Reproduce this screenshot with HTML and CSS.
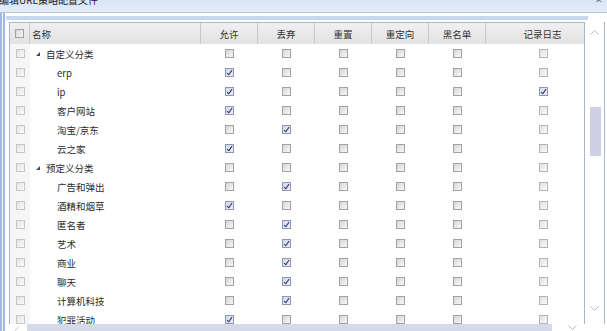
FILE: index.html
```html
<!DOCTYPE html>
<html lang="zh-CN">

<head>
    <meta charset="UTF-8">
    <title>编辑URL策略配置文件</title>
    <link rel="stylesheet" href="styles.css">
</head>

<body>
    <div class="window">
        <!-- Title bar -->
        <div class="titlebar">
            <span class="title">编辑URL策略配置文件</span>
            <span class="close">✕</span>
        </div>

        <div class="frame">
            <div class="strip"></div>

            <div class="view">
                <!-- Policy grid -->
                <div class="grid">
                    <div class="row head">
                        <div class="cell sel"><span class="cb"></span></div>
                        <div class="cell name">名称</div>
                        <div class="cell">允许</div>
                        <div class="cell">丢弃</div>
                        <div class="cell">重置</div>
                        <div class="cell">重定向</div>
                        <div class="cell">黑名单</div>
                        <div class="cell">记录日志</div>
                    </div>

                    <div class="row">
                        <div class="cell sel"><span class="cb dim"></span></div>
                        <div class="cell name group"><span class="tri"></span>自定义分类</div>
                        <div class="cell"><span class="cb"></span></div>
                        <div class="cell"><span class="cb"></span></div>
                        <div class="cell"><span class="cb"></span></div>
                        <div class="cell"><span class="cb"></span></div>
                        <div class="cell"><span class="cb"></span></div>
                        <div class="cell"><span class="cb light"></span></div>
                    </div>
                    <div class="row">
                        <div class="cell sel"><span class="cb dim"></span></div>
                        <div class="cell name child">erp</div>
                        <div class="cell"><span class="cb on"></span></div>
                        <div class="cell"><span class="cb"></span></div>
                        <div class="cell"><span class="cb"></span></div>
                        <div class="cell"><span class="cb"></span></div>
                        <div class="cell"><span class="cb"></span></div>
                        <div class="cell"><span class="cb light"></span></div>
                    </div>
                    <div class="row">
                        <div class="cell sel"><span class="cb dim"></span></div>
                        <div class="cell name child">ip</div>
                        <div class="cell"><span class="cb on"></span></div>
                        <div class="cell"><span class="cb"></span></div>
                        <div class="cell"><span class="cb"></span></div>
                        <div class="cell"><span class="cb"></span></div>
                        <div class="cell"><span class="cb"></span></div>
                        <div class="cell"><span class="cb on"></span></div>
                    </div>
                    <div class="row">
                        <div class="cell sel"><span class="cb dim"></span></div>
                        <div class="cell name child">客户网站</div>
                        <div class="cell"><span class="cb on"></span></div>
                        <div class="cell"><span class="cb"></span></div>
                        <div class="cell"><span class="cb"></span></div>
                        <div class="cell"><span class="cb"></span></div>
                        <div class="cell"><span class="cb"></span></div>
                        <div class="cell"><span class="cb light"></span></div>
                    </div>
                    <div class="row">
                        <div class="cell sel"><span class="cb dim"></span></div>
                        <div class="cell name child">淘宝/京东</div>
                        <div class="cell"><span class="cb"></span></div>
                        <div class="cell"><span class="cb on"></span></div>
                        <div class="cell"><span class="cb"></span></div>
                        <div class="cell"><span class="cb"></span></div>
                        <div class="cell"><span class="cb"></span></div>
                        <div class="cell"><span class="cb light"></span></div>
                    </div>
                    <div class="row">
                        <div class="cell sel"><span class="cb dim"></span></div>
                        <div class="cell name child">云之家</div>
                        <div class="cell"><span class="cb on"></span></div>
                        <div class="cell"><span class="cb"></span></div>
                        <div class="cell"><span class="cb"></span></div>
                        <div class="cell"><span class="cb"></span></div>
                        <div class="cell"><span class="cb"></span></div>
                        <div class="cell"><span class="cb light"></span></div>
                    </div>
                    <div class="row">
                        <div class="cell sel"><span class="cb dim"></span></div>
                        <div class="cell name group"><span class="tri"></span>预定义分类</div>
                        <div class="cell"><span class="cb"></span></div>
                        <div class="cell"><span class="cb"></span></div>
                        <div class="cell"><span class="cb"></span></div>
                        <div class="cell"><span class="cb"></span></div>
                        <div class="cell"><span class="cb"></span></div>
                        <div class="cell"><span class="cb light"></span></div>
                    </div>
                    <div class="row">
                        <div class="cell sel"><span class="cb dim"></span></div>
                        <div class="cell name child">广告和弹出</div>
                        <div class="cell"><span class="cb"></span></div>
                        <div class="cell"><span class="cb on"></span></div>
                        <div class="cell"><span class="cb"></span></div>
                        <div class="cell"><span class="cb"></span></div>
                        <div class="cell"><span class="cb"></span></div>
                        <div class="cell"><span class="cb light"></span></div>
                    </div>
                    <div class="row">
                        <div class="cell sel"><span class="cb dim"></span></div>
                        <div class="cell name child">酒精和烟草</div>
                        <div class="cell"><span class="cb on"></span></div>
                        <div class="cell"><span class="cb"></span></div>
                        <div class="cell"><span class="cb"></span></div>
                        <div class="cell"><span class="cb"></span></div>
                        <div class="cell"><span class="cb"></span></div>
                        <div class="cell"><span class="cb light"></span></div>
                    </div>
                    <div class="row">
                        <div class="cell sel"><span class="cb dim"></span></div>
                        <div class="cell name child">匿名者</div>
                        <div class="cell"><span class="cb"></span></div>
                        <div class="cell"><span class="cb on"></span></div>
                        <div class="cell"><span class="cb"></span></div>
                        <div class="cell"><span class="cb"></span></div>
                        <div class="cell"><span class="cb"></span></div>
                        <div class="cell"><span class="cb light"></span></div>
                    </div>
                    <div class="row">
                        <div class="cell sel"><span class="cb dim"></span></div>
                        <div class="cell name child">艺术</div>
                        <div class="cell"><span class="cb"></span></div>
                        <div class="cell"><span class="cb on"></span></div>
                        <div class="cell"><span class="cb"></span></div>
                        <div class="cell"><span class="cb"></span></div>
                        <div class="cell"><span class="cb"></span></div>
                        <div class="cell"><span class="cb light"></span></div>
                    </div>
                    <div class="row">
                        <div class="cell sel"><span class="cb dim"></span></div>
                        <div class="cell name child">商业</div>
                        <div class="cell"><span class="cb"></span></div>
                        <div class="cell"><span class="cb on"></span></div>
                        <div class="cell"><span class="cb"></span></div>
                        <div class="cell"><span class="cb"></span></div>
                        <div class="cell"><span class="cb"></span></div>
                        <div class="cell"><span class="cb light"></span></div>
                    </div>
                    <div class="row">
                        <div class="cell sel"><span class="cb dim"></span></div>
                        <div class="cell name child">聊天</div>
                        <div class="cell"><span class="cb"></span></div>
                        <div class="cell"><span class="cb on"></span></div>
                        <div class="cell"><span class="cb"></span></div>
                        <div class="cell"><span class="cb"></span></div>
                        <div class="cell"><span class="cb"></span></div>
                        <div class="cell"><span class="cb light"></span></div>
                    </div>
                    <div class="row">
                        <div class="cell sel"><span class="cb dim"></span></div>
                        <div class="cell name child">计算机科技</div>
                        <div class="cell"><span class="cb"></span></div>
                        <div class="cell"><span class="cb on"></span></div>
                        <div class="cell"><span class="cb"></span></div>
                        <div class="cell"><span class="cb"></span></div>
                        <div class="cell"><span class="cb"></span></div>
                        <div class="cell"><span class="cb light"></span></div>
                    </div>
                    <div class="row">
                        <div class="cell sel"><span class="cb dim"></span></div>
                        <div class="cell name child">犯罪活动</div>
                        <div class="cell"><span class="cb on"></span></div>
                        <div class="cell"><span class="cb"></span></div>
                        <div class="cell"><span class="cb"></span></div>
                        <div class="cell"><span class="cb"></span></div>
                        <div class="cell"><span class="cb"></span></div>
                        <div class="cell"><span class="cb light"></span></div>
                    </div>
                </div>

                <!-- Vertical scrollbar -->
                <div class="vscroll">
                    <div class="arrow">
                        <svg width="9" height="5" viewBox="0 0 9 5"><path d="M0.5 4.5 L4.5 0.5 L8.5 4.5" fill="none" stroke="#b4bccc" /></svg>
                    </div>
                    <div class="track"><div class="thumb"></div></div>
                    <div class="arrow">
                        <svg width="9" height="5" viewBox="0 0 9 5"><path d="M0.5 0.5 L4.5 4.5 L8.5 0.5" fill="none" stroke="#b4bccc" /></svg>
                    </div>
                </div>
            </div>

            <!-- Horizontal scrollbar (top part only) -->
            <div class="hscroll">
                <div class="harrow left">
                    <svg width="5" height="6" viewBox="0 0 5 6"><path d="M4.5 0.5 L0.5 5.5" fill="none" stroke="#c4cad6" /></svg>
                </div>
                <div class="hthumb"></div>
                <div class="harrow right">
                    <svg width="9" height="5" viewBox="0 0 9 5"><path d="M0.5 0.5 L4.5 4.5 L8.5 0.5" fill="none" stroke="#b4bccc" /></svg>
                </div>
            </div>
        </div>
    </div>
</body>

</html>
```

FILE: styles.css
```css
* {
    box-sizing: border-box;
}

body {
    margin: 0;
    background: #fff;
    font-family: "Noto Sans CJK SC", "Noto Sans", sans-serif;
    font-size: 9.5px;
    color: #2b2b2b;
}

.window {
    width: 607px;
    height: 331px;
    overflow: hidden;
    display: flex;
    flex-direction: column;
}

/* Title bar */
.titlebar {
    flex: none;
    height: 13px;
    display: flex;
    justify-content: space-between;
    overflow: hidden;
    background: linear-gradient(#d8e5f4, #e3edf8);
    border-bottom: 1px solid #b3c3d8;
}

.title {
    font-size: 10px;
    line-height: 10px;
    margin: -5px 0 0 -1px;
    color: #1e1e1e;
}

.close {
    font-size: 9px;
    line-height: 9px;
    margin: -5px 4px 0 0;
    color: #5a6270;
}

/* Frame */
.frame {
    flex: 1;
    display: flex;
    flex-direction: column;
    border-left: 5px double #9fbbe0;
    padding: 3px 0 0 1px;
}

.strip {
    flex: none;
    width: 582px;
    height: 4px;
    background: #c5d8f0;
}

.view {
    flex: none;
    display: flex;
    height: 302px;
    margin: 2px 0 0 3px;
}

/* Grid */
.grid {
    width: 576px;
    border: 1px solid #a8b6c8;
    border-bottom: 0;
    overflow: hidden;
}

.row {
    display: grid;
    grid-template-columns: 20px 171px 57px 57px 57px 57px 57px 114px;
    width: 590px;
    height: 19px;
}

.row.head {
    height: 21px;
    background: linear-gradient(#f0f0f0, #e2e2e2);
}

.cell {
    display: flex;
    align-items: center;
    justify-content: center;
    white-space: nowrap;
}

.head .cell {
    border-right: 1px solid #c9c9c9;
    color: #333;
}

.sel {
    background: #f6f6f6;
}

.head .sel {
    background: none;
}

.name {
    justify-content: flex-start;
}

.head .name {
    padding-left: 2px;
}

.group {
    padding-left: 6px;
}

.child {
    padding-left: 27px;
}

.tri {
    width: 0;
    height: 0;
    margin-right: 6px;
    border-style: solid;
    border-width: 0 0 4px 4px;
    border-color: transparent transparent #4a4a4a transparent;
}

/* Checkboxes */
.cb {
    position: relative;
    width: 9px;
    height: 9px;
    border: 1px solid #a2a2a2;
    background: linear-gradient(135deg, #d6d6d6, #f8f8f8);
}

.cb.dim {
    border-color: #c6c6c6;
    background: linear-gradient(135deg, #e4e4e4, #fafafa);
}

.cb.light {
    border-color: #b4b4b4;
    background: linear-gradient(135deg, #e0e0e0, #fafafa);
}

.cb.on {
    border-color: #8e98b6;
    background: linear-gradient(135deg, #d2d7ea, #eef0f8);
}

.cb.on::after {
    content: "";
    position: absolute;
    left: 2px;
    top: 0;
    width: 2px;
    height: 5px;
    border: solid #2a3570;
    border-width: 0 1.5px 1.5px 0;
    transform: rotate(35deg);
}

/* Scrollbars */
.vscroll {
    flex: none;
    width: 20px;
    display: flex;
    flex-direction: column;
    padding-bottom: 6px;
    border-right: 1px solid #a9b9cf;
}

.arrow {
    flex: none;
    height: 20px;
    display: flex;
    align-items: center;
    justify-content: center;
}

.track {
    flex: 1;
    padding: 65px 3px 0 5px;
}

.thumb {
    height: 49px;
    background: #ccd1e3;
}

.hscroll {
    flex: none;
    height: 7px;
    display: flex;
}

.harrow {
    display: flex;
    justify-content: center;
    padding-top: 2px;
}

.harrow.left {
    width: 21px;
}

.hthumb {
    width: 525px;
    background: #d5daea;
}

.harrow.right {
    width: 40px;
    padding-top: 1px;
}
```
